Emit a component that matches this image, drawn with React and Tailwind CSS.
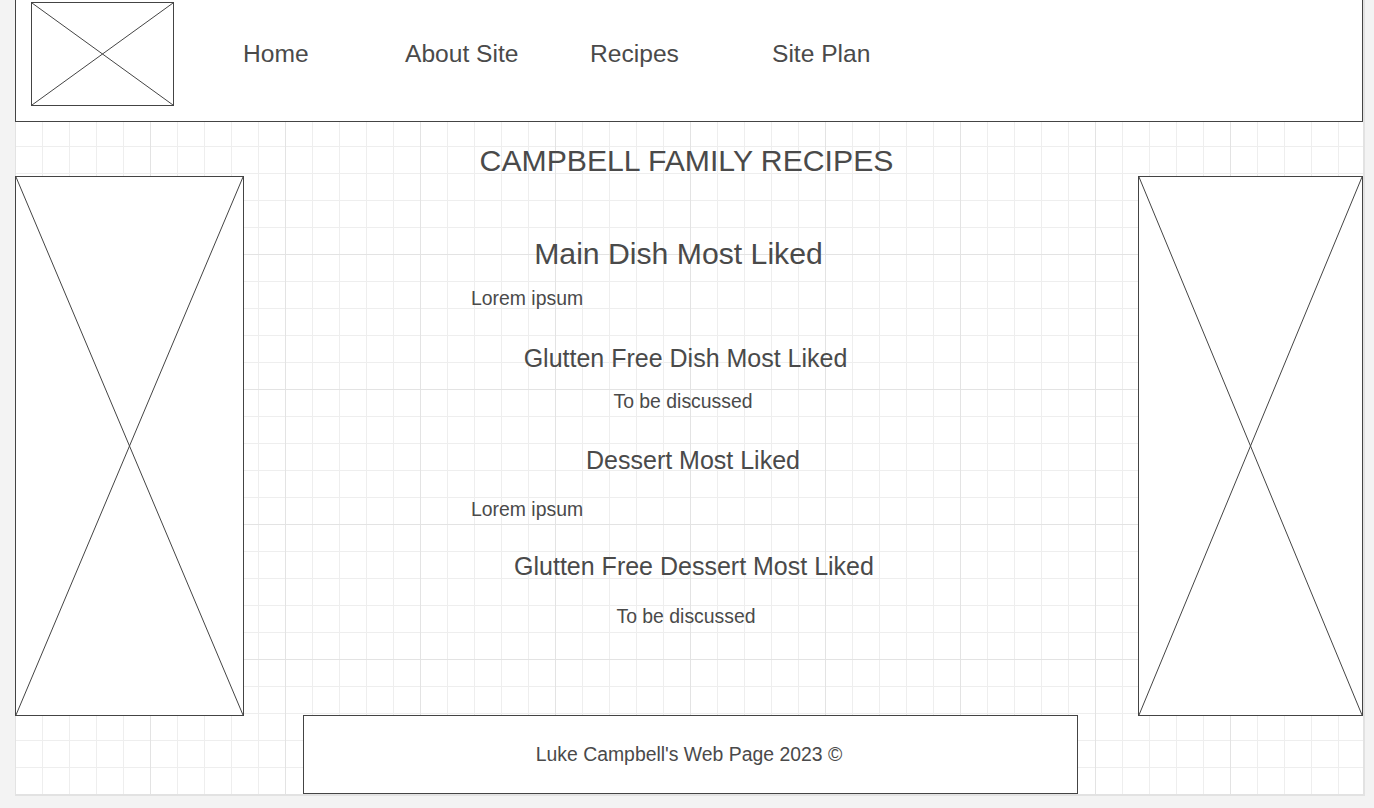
import React from "react";

function Placeholder({ className }) {
  return (
    <div className={"relative border border-[#444] bg-white " + className}>
      <svg className="absolute inset-0 w-full h-full" preserveAspectRatio="none" viewBox="0 0 100 100">
        <line x1="0" y1="0" x2="100" y2="100" stroke="#444" strokeWidth="1" vectorEffect="non-scaling-stroke" />
        <line x1="100" y1="0" x2="0" y2="100" stroke="#444" strokeWidth="1" vectorEffect="non-scaling-stroke" />
      </svg>
    </div>
  );
}

export default function App() {
  const nav = [
    { label: "Home", w: "w-[162px]" },
    { label: "About Site", w: "w-[185px]" },
    { label: "Recipes", w: "w-[182px]" },
    { label: "Site Plan", w: "w-[160px]" },
  ];

  return (
    <div className="w-full h-[808px] bg-[#f3f3f3] overflow-hidden font-['Liberation_Sans',Arial,sans-serif] text-[#4a4a4a]">
      {/* canvas with grid */}
      <div className="ml-[15px] w-[1348px] h-[794px] flex flex-col shadow-[1px_1px_0_1px_#e2e2e2] bg-white bg-[linear-gradient(to_right,#e3e3e3_1px,transparent_1px),linear-gradient(to_bottom,#e3e3e3_1px,transparent_1px),linear-gradient(to_right,#eeeeee_1px,transparent_1px),linear-gradient(to_bottom,#eeeeee_1px,transparent_1px)] bg-[size:135px_135px,135px_135px,27px_27px,27px_27px] bg-[position:0_119px,0_119px,0_11px,0_11px]">
        {/* header */}
        <div className="h-[122px] shrink-0 flex items-start border-x border-b border-[#444] bg-white">
          <Placeholder className="ml-[15px] mt-[2px] w-[143px] h-[104px] shrink-0" />
          <nav className="flex ml-[69px] mt-[42px]">
            {nav.map((n) => (
              <span key={n.label} className={"text-[24.6px] leading-[24.6px] whitespace-nowrap " + n.w}>
                {n.label}
              </span>
            ))}
          </nav>
        </div>

        {/* title */}
        <div className="h-[54px] shrink-0 flex justify-center">
          <h1 className="mt-[24.1px] ml-[-5px] text-[30.2px] leading-[30.2px] whitespace-nowrap">CAMPBELL FAMILY RECIPES</h1>
        </div>

        {/* body */}
        <div className="flex h-[540px] shrink-0">
          <Placeholder className="w-[229px] h-[540px] shrink-0" />

          <div className="flex-1 flex flex-col items-center">
            <h2 className="mt-[62.7px] mr-[25px] text-[30.2px] leading-[30.2px] whitespace-nowrap">Main Dish Most Liked</h2>
            <p className="self-start ml-[227px] mt-[20.4px] text-[19.4px] leading-[19.4px]">Lorem ipsum</p>

            <h3 className="mt-[37.8px] mr-[11px] text-[25px] leading-[25px] whitespace-nowrap">Glutten Free Dish Most Liked</h3>
            <p className="mt-[20.4px] mr-[16px] text-[19.4px] leading-[19.4px]">To be discussed</p>

            <h3 className="mt-[36.8px] ml-[4px] text-[25px] leading-[25px] whitespace-nowrap">Dessert Most Liked</h3>
            <p className="self-start ml-[227px] mt-[26.5px] text-[19.4px] leading-[19.4px]">Lorem ipsum</p>

            <h3 className="mt-[34.8px] ml-[6px] text-[25px] leading-[25px] whitespace-nowrap">Glutten Free Dessert Most Liked</h3>
            <p className="mt-[28.1px] mr-[10px] text-[19.4px] leading-[19.4px]">To be discussed</p>
          </div>

          <Placeholder className="w-[225px] h-[540px] shrink-0" />
        </div>

        {/* footer */}
        <div className="-mt-[1px] ml-[288px] w-[775px] h-[79px] shrink-0 border border-[#444] bg-white flex items-center justify-center">
          <p className="text-[19.4px] leading-[19.4px] mr-[3px]">Luke Campbell's Web Page 2023 ©</p>
        </div>
      </div>
    </div>
  );
}
